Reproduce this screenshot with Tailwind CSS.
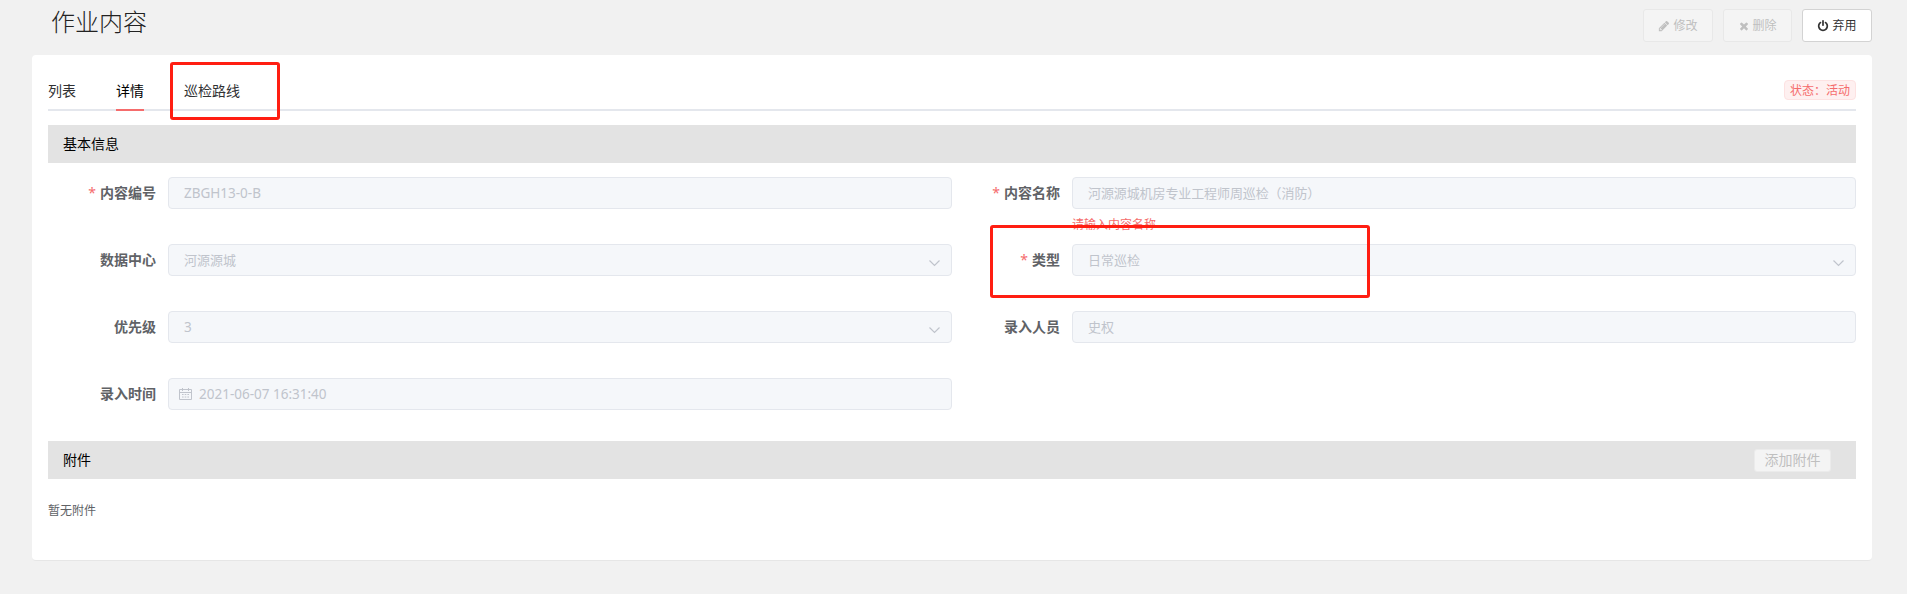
<!DOCTYPE html>
<html lang="zh-CN">
<head>
<meta charset="utf-8">
<title>作业内容</title>
<script src="https://cdn.jsdelivr.net/npm/@tailwindcss/browser@4"></script>
</head>
<body class="relative h-[594px] overflow-hidden bg-[#f1f1f1] px-8 pr-[35px] font-['Noto_Sans','Noto_Sans_CJK_SC',sans-serif] text-sm text-[#606266]">
  <header class="flex h-[55px] items-start justify-between">
    <h1 class="ml-[19px] mt-[5px] text-2xl font-light leading-[34px] text-[#222]">作业内容</h1>
    <div class="mt-[9px] flex gap-[10px] text-xs">
      <button class="flex h-[33px] w-[70px] items-center justify-center gap-[3px] rounded-[3px] border border-[#e8e8e8] bg-[#f4f4f4] text-[#bfbfbf]">
        <svg class="size-3" viewBox="0 0 1792 1792" fill="currentColor"><path d="M491 1536l91-91-235-235-91 91v107h128v128h107zm523-928q0-22-22-22-10 0-17 7l-542 542q-7 7-7 17 0 22 22 22 10 0 17-7l542-542q7-7 7-17zm-54-192l416 416-832 832h-416v-416zm683 96q0 53-37 90l-166 166-416-416 166-165q36-38 90-38 53 0 91 38l235 234q37 39 37 91z"/></svg>修改
      </button>
      <button class="flex h-[33px] w-[69px] items-center justify-center gap-[2px] rounded-[3px] border border-[#e8e8e8] bg-[#f4f4f4] text-[#bfbfbf]">
        <svg class="size-3" viewBox="0 0 1792 1792" fill="currentColor"><path d="M1490 1322q0 40-28 68l-136 136q-28 28-68 28t-68-28l-294-294-294 294q-28 28-68 28t-68-28l-136-136q-28-28-28-68t28-68l294-294-294-294q-28-28-28-68t28-68l136-136q28-28 68-28t68 28l294 294 294-294q28-28 68-28t68 28l136 136q28 28 28 68t-28 68l-294 294 294 294q28 28 28 68z"/></svg>删除
      </button>
      <button class="flex h-[33px] w-[70px] items-center justify-center gap-[3px] rounded-[3px] border border-[#d3d3d3] bg-white text-[#333]">
        <svg class="size-3" viewBox="0 0 1792 1792" fill="currentColor"><path d="M1664 896q0 156-61 298t-164 245-245 164-298 61-298-61-245-164-164-245-61-298q0-182 80.5-343t226.5-270q43-32 95.5-25t83.5 50q32 42 24.5 94.5t-49.5 84.5q-98 74-151.5 181t-53.5 228q0 104 40.5 198.5t109.5 163.5 163.5 109.5 198.5 40.5 198.5-40.5 163.5-109.5 109.5-163.5 40.5-198.5q0-121-53.5-228t-151.5-181q-42-32-49.5-84.5t24.5-94.5q31-43 84-50t95 25q146 109 226.5 270t80.5 343zm-640-768v640q0 52-38 90t-90 38-90-38-38-90v-640q0-52 38-90t90-38 90 38 38 90z"/></svg>弃用
      </button>
    </div>
  </header>

  <main class="h-[506px] rounded border-b border-[#e6e6e6] bg-white px-4 pt-4">
    <nav class="flex h-10 items-stretch justify-between border-b-2 border-[#e4e7ed] text-[#303133]">
      <div class="flex gap-10 leading-10">
        <a class="h-10">列表</a>
        <a class="h-10 border-b-2 border-[#f56c6c] text-black">详情</a>
        <a class="h-10">巡检路线</a>
      </div>
      <span class="mt-[9px] flex h-5 w-[72px] items-center justify-center rounded border border-[#fde2e2] bg-[#fef0f0] pt-px text-xs text-[#f56c6c]">状态：活动</span>
    </nav>

    <h2 class="mt-[14px] h-[38px] bg-[#e3e3e3] pl-[15px] leading-[38px] text-black">基本信息</h2>

    <form class="mt-[14px] grid grid-cols-2 gap-y-[35px] text-[13px]">
      <div class="flex h-8">
        <label class="w-[120px] pr-3 text-right text-sm font-bold leading-8"><span class="mr-1 font-normal text-[#f56c6c]">*</span>内容编号</label>
        <div class="flex flex-1 items-center rounded border border-[#e4e7ed] bg-[#f5f7fa] px-[15px] pt-0.5 text-[13.5px] text-[#c0c4cc]">ZBGH13-0-B</div>
      </div>
      <div class="relative flex h-8">
        <label class="w-[120px] pr-3 text-right text-sm font-bold leading-8"><span class="mr-1 font-normal text-[#f56c6c]">*</span>内容名称</label>
        <div class="flex flex-1 items-center rounded border border-[#e4e7ed] bg-[#f5f7fa] px-[15px] tracking-[-0.1px] text-[#c0c4cc]">河源源城机房专业工程师周巡检（消防）</div>
        <p class="absolute left-[120px] top-[39px] text-xs leading-[18px] text-[#f56c6c]">请输入内容名称</p>
      </div>
      <div class="flex h-8">
        <label class="w-[120px] pr-3 text-right text-sm font-bold leading-8">数据中心</label>
        <div class="flex flex-1 items-center justify-between rounded border border-[#e4e7ed] bg-[#f5f7fa] pl-[15px] pr-[11px] text-[#c0c4cc]">河源源城
          <svg class="mt-[6px] h-[7px] w-[11px]" viewBox="0 0 11 7" fill="none" stroke="currentColor" stroke-width="1.2"><path d="M.5.5l5 5 5-5"/></svg>
        </div>
      </div>
      <div class="flex h-8">
        <label class="w-[120px] pr-3 text-right text-sm font-bold leading-8"><span class="mr-1 font-normal text-[#f56c6c]">*</span>类型</label>
        <div class="flex flex-1 items-center justify-between rounded border border-[#e4e7ed] bg-[#f5f7fa] pl-[15px] pr-[11px] text-[#c0c4cc]">日常巡检
          <svg class="mt-[6px] h-[7px] w-[11px]" viewBox="0 0 11 7" fill="none" stroke="currentColor" stroke-width="1.2"><path d="M.5.5l5 5 5-5"/></svg>
        </div>
      </div>
      <div class="flex h-8">
        <label class="w-[120px] pr-3 text-right text-sm font-bold leading-8">优先级</label>
        <div class="flex flex-1 items-center justify-between rounded border border-[#e4e7ed] bg-[#f5f7fa] pl-[15px] pr-[11px] text-[13.5px] text-[#c0c4cc]"><span class="pt-0.5">3</span>
          <svg class="mt-[6px] h-[7px] w-[11px]" viewBox="0 0 11 7" fill="none" stroke="currentColor" stroke-width="1.2"><path d="M.5.5l5 5 5-5"/></svg>
        </div>
      </div>
      <div class="flex h-8">
        <label class="w-[120px] pr-3 text-right text-sm font-bold leading-8">录入人员</label>
        <div class="flex flex-1 items-center rounded border border-[#e4e7ed] bg-[#f5f7fa] px-[15px] text-[#c0c4cc]">史权</div>
      </div>
      <div class="flex h-8">
        <label class="w-[120px] pr-3 text-right text-sm font-bold leading-8">录入时间</label>
        <div class="flex flex-1 items-center gap-[7px] rounded border border-[#e4e7ed] bg-[#f5f7fa] pl-[10px] text-[13.5px] text-[#c0c4cc]">
          <svg class="h-3 w-[13px]" viewBox="0 0 13 12" fill="none" stroke="currentColor"><path d="M.5 1.5h12v10H.5zM.5 4.5h12M3.5 0v3M9.5 0v3"/><path d="M3 6.5h7M3 9h7" stroke-dasharray="1.6 1.1"/></svg>
          <span class="pt-0.5">2021-06-07 16:31:40</span>
        </div>
      </div>
    </form>

    <div class="mt-[31px] flex h-[38px] items-center justify-between bg-[#e3e3e3] pl-[15px] pr-[25px]">
      <h2 class="text-black">附件</h2>
      <button class="flex h-[23px] w-[77px] items-center justify-center rounded-[3px] border border-[#ebebeb] bg-[#f4f4f4] text-sm text-[#bfbfbf]">添加附件</button>
    </div>
    <p class="mt-[23px] text-xs leading-[18px]">暂无附件</p>
  </main>

  <div class="absolute left-[170px] top-[62px] h-[58px] w-[110px] rounded-[3px] border-3 border-[#ff1e12]"></div>
  <div class="absolute left-[990px] top-[225px] h-[73px] w-[380px] rounded-[3px] border-3 border-[#ff1e12]"></div>
</body>
</html>
